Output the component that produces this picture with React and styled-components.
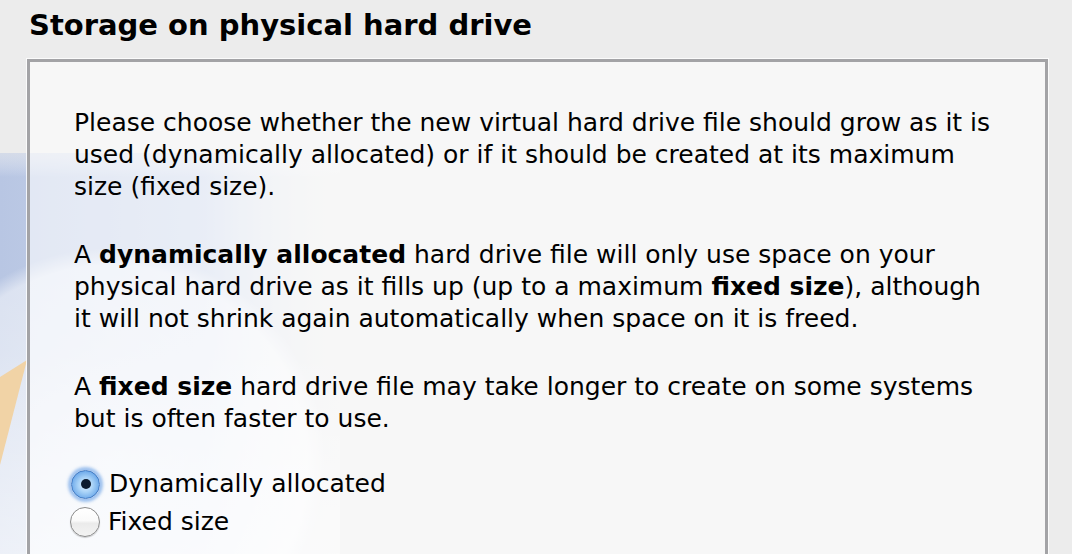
import React from "react";
import styled, { createGlobalStyle, css } from "styled-components";

const Global = createGlobalStyle`
  html, body { margin: 0; padding: 0; }
  body {
    background: #ececec;
    font-family: "DejaVu Sans", "Liberation Sans", sans-serif;
    color: #000;
  }
`;

const Page = styled.div`
  position: relative;
  width: 1072px;
  height: 554px;
  overflow: hidden;
  background: #ececec;
  padding: 8px 24px 0 27px;
  box-sizing: border-box;
`;

const Watermark = styled.svg`
  position: absolute;
  left: 0;
  top: 153px;
  width: 340px;
  height: 401px;
`;

const Title = styled.h1`
  margin: 0 0 0 2px;
  font-family: "DejaVu Sans", sans-serif;
  font-weight: bold;
  font-size: 29px;
  line-height: 34px;
  color: #000;
`;

const Panel = styled.section`
  position: relative;
  display: flex;
  flex-direction: column;
  align-items: flex-start;
  margin-top: 17px;
  width: 1021px;
  min-height: 560px;
  box-sizing: border-box;
  border: 3px solid #a3a3a6;
  background: rgba(255, 255, 255, 0.58);
  box-shadow: 0 0 0 1px rgba(255, 255, 255, 0.8);
  padding: 45px 20px 0 44px;
`;

const Para = styled.p`
  margin: 0;
  font-size: 25px;
  line-height: 32px;
  white-space: nowrap;
  & + & {
    margin-top: 36px;
  }
`;

const RadioGroup = styled.div`
  display: flex;
  flex-direction: column;
  margin-top: 30px;
  margin-left: -3px;
`;

const RadioRow = styled.label`
  display: flex;
  align-items: center;
  gap: 9px;
  height: 38px;
  font-size: 25px;
  line-height: 38px;
`;

const RadioDot = styled.span`
  position: relative;
  flex: none;
  border-radius: 50%;
  box-sizing: border-box;
  ${(p) =>
    p.$checked
      ? css`
          width: 29px;
          height: 29px;
          border: 1px solid #3f78c2;
          background: radial-gradient(
            circle at 50% 52%,
            #e0f0fe 0%,
            #a8d2f7 38%,
            #6eaaea 72%,
            #4b88d4 100%
          );
          box-shadow: 0 0 3px 3px rgba(120, 170, 232, 0.7);
          &::after {
            content: "";
            position: absolute;
            left: 50%;
            top: 50%;
            width: 10px;
            height: 10px;
            margin: -5px 0 0 -5px;
            border-radius: 50%;
            background: #0c1a2e;
          }
        `
      : css`
          width: 30px;
          height: 30px;
          margin-left: -1px;
          margin-right: -1px;
          border: 1px solid #8b8b8b;
          background: linear-gradient(
            to bottom,
            #ffffff 0%,
            #fafafa 45%,
            #ebebeb 55%,
            #f3f3f3 100%
          );
          box-shadow: 0 1px 1px rgba(0, 0, 0, 0.18);
        `}
`;

const RadioLabel = styled.span`
  white-space: nowrap;
`;

function Radio({ checked, children }) {
  return (
    <RadioRow>
      <RadioDot $checked={checked} />
      <RadioLabel>{children}</RadioLabel>
    </RadioRow>
  );
}

export default function App() {
  return (
    <>
      <Global />
      <Page>
        <Watermark viewBox="0 0 340 401" aria-hidden="true">
          <defs>
            <linearGradient id="wmBlue" x1="0" y1="0" x2="1" y2="0">
              <stop offset="0" stopColor="#b8c6e3" />
              <stop offset="0.6" stopColor="#c6d2ea" stopOpacity="0.9" />
              <stop offset="1" stopColor="#e4e9f2" stopOpacity="0" />
            </linearGradient>
            <linearGradient id="wmFade" x1="0" y1="0" x2="0" y2="1">
              <stop offset="0" stopColor="#ececec" stopOpacity="0.55" />
              <stop offset="0.06" stopColor="#ffffff" stopOpacity="0" />
              <stop offset="0.5" stopColor="#ffffff" stopOpacity="0" />
              <stop offset="1" stopColor="#ffffff" stopOpacity="0.45" />
            </linearGradient>
            <radialGradient id="wmCircle" cx="0.5" cy="0.5" r="0.5">
              <stop offset="0" stopColor="#ffffff" stopOpacity="0.65" />
              <stop offset="0.92" stopColor="#ffffff" stopOpacity="0.5" />
              <stop offset="1" stopColor="#ffffff" stopOpacity="0" />
            </radialGradient>
          </defs>
          <rect x="0" y="0" width="340" height="401" fill="url(#wmBlue)" />
          <rect x="0" y="0" width="340" height="401" fill="url(#wmFade)" />
          <circle cx="110" cy="310" r="215" fill="url(#wmCircle)" />
          <polygon points="27,207 0,224 0,312" fill="#f1d3a6" />
        </Watermark>

        <Title>Storage on physical hard drive</Title>

        <Panel>
          <Para>
            Please choose whether the new virtual hard drive file should grow as it is
            <br />
            used (dynamically allocated) or if it should be created at its maximum
            <br />
            size (fixed size).
          </Para>
          <Para>
            A <b>dynamically allocated</b> hard drive file will only use space on your
            <br />
            physical hard drive as it fills up (up to a maximum <b>fixed size</b>), although
            <br />
            it will not shrink again automatically when space on it is freed.
          </Para>
          <Para>
            A <b>fixed size</b> hard drive file may take longer to create on some systems
            <br />
            but is often faster to use.
          </Para>
          <RadioGroup>
            <Radio checked>Dynamically allocated</Radio>
            <Radio>Fixed size</Radio>
          </RadioGroup>
        </Panel>
      </Page>
    </>
  );
}
